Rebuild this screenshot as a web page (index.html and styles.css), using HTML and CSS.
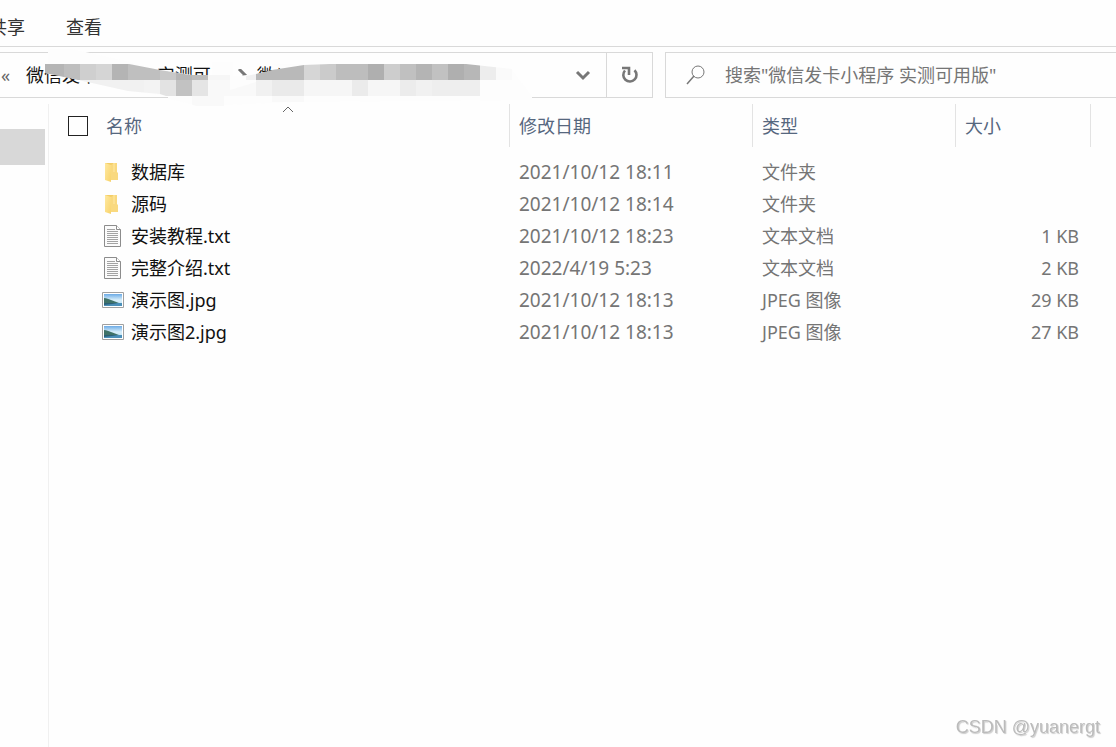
FILE: index.html
```
<!DOCTYPE html>
<html lang="zh-CN">
<head>
    <meta charset="UTF-8">
    <meta name="viewport" content="width=device-width, initial-scale=1.0">
    <title>微信发卡小程序 实测可用版</title>
    <link rel="stylesheet" href="styles.css">
</head>
<body>
    <svg class="defs" width="0" height="0" aria-hidden="true">
        <linearGradient id="folder-front" x1="0" y1="0" x2="1" y2="1">
            <stop offset="0" stop-color="#ffe9a0"/>
            <stop offset="1" stop-color="#f8d36c"/>
        </linearGradient>
        <linearGradient id="sky" x1="0" y1="0" x2="0" y2="1">
            <stop offset="0" stop-color="#6cabe6"/>
            <stop offset="0.5" stop-color="#d9effa"/>
            <stop offset="1" stop-color="#b5dcef"/>
        </linearGradient>
        <symbol id="icon-folder" viewBox="0 0 22 22">
            <path d="M3 2h12v17H3z" fill="#f3cd66"/>
            <path d="M3 2l6 2v17l-6-2z" fill="url(#folder-front)"/>
            <path d="M9 4l3-2h3v9l1 1v7H9z" fill="#f9d97f"/>
            <path d="M12 2v9" stroke="#ffe9a6"/>
        </symbol>
        <symbol id="icon-text" viewBox="0 0 22 22">
            <path d="M2.500 .5h12l4 4v17h-16z" fill="#fbfbfb" stroke="#8c8c8c"/>
            <path d="M14.500 .5v4h4" fill="#fff" stroke="#8c8c8c"/>
            <path d="M5 4.500h8M5 6.500h11M5 8.500h11M5 10.500h11M5 12.500h11M5 14.500h11M5 16.500h11M5 18.500h11" stroke="#a3a3a3"/>
        </symbol>
        <symbol id="icon-image" viewBox="0 0 22 22">
            <path d="M.5 3.500h21v15H.5z" fill="#fff" stroke="#a0a0a0"/>
            <path d="M2 5h18v12H2z" fill="url(#sky)"/>
            <path d="M2 9c3 0 4 1 7 2s5 2 8 3H2z" fill="#3f7268"/>
            <path d="M2 14h18v3H2z" fill="#4b8fb8"/>
            <path d="M2 14h14l-6 1-8 1z" fill="#2c6076"/>
        </symbol>
    </svg>

    <nav class="ribbon">
        <button type="button">共享</button>
        <button type="button">查看</button>
    </nav>

    <div class="toolbar">
        <div class="address">
            <div class="crumbs">
                <span class="more">«</span>
                <a href="#">微信发卡小程序 实测可用</a>
                <svg class="crumb-arrow" width="12" height="12" viewBox="0 0 12 12"><path d="M2 0l6 6-6 6" fill="none" stroke="#777" stroke-width="3"/></svg>
                <a href="#">微信发卡小程序</a>
            </div>
            <button type="button" class="history" aria-label="展开">
                <svg width="16" height="12" viewBox="0 0 16 12"><path d="M2 3l6 6 6-6" fill="none" stroke="#777" stroke-width="3"/></svg>
            </button>
            <button type="button" class="refresh" aria-label="刷新">
                <svg width="20" height="20" viewBox="0 0 20 20">
                    <path d="M14.500 5.200A6.600 6.600 0 1 1 5 5.500" fill="none" stroke="#777" stroke-width="2.600"/>
                    <path d="M2 3h7v7" fill="none" stroke="#777" stroke-width="2.600"/>
                </svg>
            </button>
            <!-- 路径打码 -->
            <svg class="mosaic" width="560" height="60" viewBox="0 48 560 60" aria-hidden="true">
                <clipPath id="stroke-left">
                    <path d="M45 64H129L160 70 190 75H230V90L256 82V106H196L160 94 128 91 92 83 45 73z"/>
                </clipPath>
                <clipPath id="stroke-right">
                    <path d="M246 76L256 74 272 70 304 65 330 64H466L512 69V80L496 96 304 102H246z"/>
                </clipPath>
                <path d="M48 49H72L130 62 160 70 192 75H212V62H233V76H238L256 74 304 65 330 64H466L512 70 532 96V100L300 102 200 106 168 99V96L128 91 92 82 45 73V64H48z" fill="#fdfdfd"/>
                <path d="M272 64h140v10H290z" fill="#fdfdfd"/>
                <g clip-path="url(#stroke-left)">
                    <path d="M45 64h19v16H45z" fill="#b5b5b5"/>
                    <path d="M64 64h16v16H64z" fill="#bebebe"/>
                    <path d="M80 64h16v16H80z" fill="#cfcfcf"/>
                    <path d="M96 64h16v16H96z" fill="#d5d5d5"/>
                    <path d="M112 64h16v16h-16z" fill="#b4b4b4"/>
                    <path d="M128 64h32v16h-32z" fill="#bfbfbf"/>
                    <path d="M160 64h16v16h-16z" fill="#c8c8c8"/>
                    <path d="M176 64h16v16h-16z" fill="#b6b6b6"/>
                    <path d="M192 64h16v16h-16z" fill="#bdbdbd"/>
                    <path d="M208 64h48v16h-48z" fill="#f6f6f6"/>
                    <path d="M80 80h64v16H80z" fill="#f1f1f1"/>
                    <path d="M144 80h16v16h-16z" fill="#f3f3f3"/>
                    <path d="M160 80h16v16h-16z" fill="#e3e3e3"/>
                    <path d="M176 80h16v16h-16z" fill="#c2c2c2"/>
                    <path d="M192 80h16v16h-16z" fill="#e5e5e5"/>
                    <path d="M208 80h48v16h-48z" fill="#f9f9f9"/>
                    <path d="M192 96h32v10h-32z" fill="#f9f9f9"/>
                </g>
                <g clip-path="url(#stroke-right)">
                    <path d="M240 64h16v16h-16z" fill="#f1f1f1"/>
                    <path d="M256 64h48v16h-48z" fill="#b9b9b9"/>
                    <path d="M304 64h16v16h-16z" fill="#d6d6d6"/>
                    <path d="M320 64h16v16h-16z" fill="#cbcbcb"/>
                    <path d="M336 64h32v16h-32z" fill="#bdbdbd"/>
                    <path d="M368 64h16v16h-16z" fill="#afafaf"/>
                    <path d="M384 64h16v16h-16z" fill="#cdcdcd"/>
                    <path d="M400 64h16v16h-16z" fill="#c0c0c0"/>
                    <path d="M416 64h16v16h-16z" fill="#b4b4b4"/>
                    <path d="M432 64h16v16h-16z" fill="#c1c1c1"/>
                    <path d="M448 64h16v16h-16z" fill="#afafaf"/>
                    <path d="M464 64h16v16h-16z" fill="#b7b7b7"/>
                    <path d="M480 64h16v16h-16z" fill="#ededed"/>
                    <path d="M496 64h16v16h-16z" fill="#fafafa"/>
                    <path d="M256 80h16v16h-16z" fill="#f1f1f1"/>
                    <path d="M272 80h32v16h-32z" fill="#eaeaea"/>
                    <path d="M304 80h48v16h-48z" fill="#f6f6f6"/>
                    <path d="M352 80h16v16h-16z" fill="#ebebeb"/>
                    <path d="M368 80h32v16h-32z" fill="#f6f6f6"/>
                    <path d="M400 80h16v16h-16z" fill="#ececec"/>
                    <path d="M416 80h16v16h-16z" fill="#f1f1f1"/>
                    <path d="M432 80h48v16h-48z" fill="#eeeeee"/>
                    <path d="M272 96h32v6h-32z" fill="#f9f9f9"/>
                </g>
            </svg>
        </div>
        <label class="search">
            <svg width="20" height="20" viewBox="0 0 20 20"><circle cx="12" cy="7" r="6" fill="none" stroke="#777"/><path d="M8 11l-7 8" stroke="#777" stroke-width="1.500"/></svg>
            <input type="text" aria-label="搜索" placeholder="搜索&quot;微信发卡小程序 实测可用版&quot;">
        </label>
    </div>

    <div class="content">
        <aside class="sidebar">
            <div class="selected"></div>
        </aside>
        <main class="files">
            <table>
                <colgroup>
                    <col class="col-name">
                    <col class="col-date">
                    <col class="col-type">
                    <col class="col-size">
                    <col class="col-rest">
                </colgroup>
                <thead>
                    <tr>
                        <th>
                            <svg class="sort" width="12" height="8" viewBox="0 0 12 8"><path d="M1 7l5-5 5 5" fill="none" stroke="#666"/></svg>
                            <div class="head-name">
                                <input type="checkbox" aria-label="全选">
                                <span>名称</span>
                            </div>
                        </th>
                        <th>修改日期</th>
                        <th>类型</th>
                        <th>大小</th>
                        <td></td>
                    </tr>
                </thead>
                <tbody>
                    <tr>
                        <td><div class="file"><svg><use href="#icon-folder"/></svg>数据库</div></td>
                        <td class="date">2021/10/12 18:11</td>
                        <td>文件夹</td>
                        <td></td>
                    </tr>
                    <tr>
                        <td><div class="file"><svg><use href="#icon-folder"/></svg>源码</div></td>
                        <td class="date">2021/10/12 18:14</td>
                        <td>文件夹</td>
                        <td></td>
                    </tr>
                    <tr>
                        <td><div class="file"><svg><use href="#icon-text"/></svg>安装教程.txt</div></td>
                        <td class="date">2021/10/12 18:23</td>
                        <td>文本文档</td>
                        <td class="size">1 KB</td>
                    </tr>
                    <tr>
                        <td><div class="file"><svg><use href="#icon-text"/></svg>完整介绍.txt</div></td>
                        <td class="date">2022/4/19 5:23</td>
                        <td>文本文档</td>
                        <td class="size">2 KB</td>
                    </tr>
                    <tr>
                        <td><div class="file"><svg><use href="#icon-image"/></svg>演示图.jpg</div></td>
                        <td class="date">2021/10/12 18:13</td>
                        <td>JPEG 图像</td>
                        <td class="size">29 KB</td>
                    </tr>
                    <tr>
                        <td><div class="file"><svg><use href="#icon-image"/></svg>演示图2.jpg</div></td>
                        <td class="date">2021/10/12 18:13</td>
                        <td>JPEG 图像</td>
                        <td class="size">27 KB</td>
                    </tr>
                </tbody>
            </table>
        </main>
    </div>

    <div class="watermark">CSDN @yuanergt</div>
</body>
</html>
```
FILE: styles.css
```
* {
    margin: 0;
    padding: 0;
    box-sizing: border-box;
}

body {
    font-family: 'Noto Sans', 'Noto Sans CJK SC', sans-serif;
    font-size: 18px;
    line-height: 26px;
    color: #757575;
    background: #fefefe;
    min-height: 100vh;
    display: flex;
    flex-direction: column;
    overflow-x: hidden;
}

button,
input {
    font: inherit;
    color: inherit;
    background: none;
    border: none;
}

.defs {
    position: absolute;
}

/* 顶部选项卡 */
.ribbon {
    display: flex;
    gap: 41px;
    height: 47px;
    padding-top: 8px;
    margin-left: -11px;
    border-bottom: 1px solid #d9d9d9;
    color: #333;
}

/* 地址栏和搜索框 */
.toolbar {
    display: grid;
    grid-template-columns: 653fr 451fr;
    gap: 12px;
    height: 46px;
    margin-top: 5px;
}

.address {
    position: relative;
    min-width: 0;
    display: flex;
    border: 1px solid #d9d9d9;
    border-left: none;
}

.crumbs {
    flex: 1;
    min-width: 0;
    display: flex;
    align-items: center;
    overflow: hidden;
    white-space: nowrap;
    color: #111;
}

.crumbs a {
    color: inherit;
    text-decoration: none;
}

.more {
    width: 26px;
    padding-left: 1px;
    color: #666;
}

.crumb-arrow {
    flex: none;
    margin: 0 8px;
}

.history,
.refresh {
    width: 46px;
    display: flex;
    align-items: center;
    justify-content: center;
}

.refresh {
    border-left: 1px solid #d9d9d9;
}

.mosaic {
    position: absolute;
    left: 0;
    top: -5px;
    pointer-events: none;
}

.search {
    min-width: 0;
    display: flex;
    align-items: center;
    gap: 19px;
    padding-left: 20px;
    border: 1px solid #d9d9d9;
    border-right: none;
}

.search svg {
    flex: none;
}

.search input {
    flex: 1;
    min-width: 0;
    outline: none;
}

.search input::placeholder {
    color: #757575;
    opacity: 1;
}

/* 文件列表 */
.content {
    flex: 1;
    display: flex;
    padding-top: 6px;
}

.sidebar {
    flex: none;
    width: 49px;
    padding-top: 25px;
    border-right: 1px solid #f0f0f0;
}

.selected {
    width: 45px;
    height: 36px;
    background: #d8d8d8;
}

.files {
    flex: 1;
    min-width: 0;
}

table {
    width: 100%;
    table-layout: fixed;
    border-collapse: separate;
    border-spacing: 0;
}

.col-date {
    width: 243px;
}

.col-type {
    width: 203px;
}

.col-size {
    width: 135px;
}

.col-rest {
    width: 25px;
}

th {
    position: relative;
    height: 43px;
    padding-left: 9px;
    border-right: 1px solid #e3e3e3;
    text-align: left;
    font-weight: 400;
    color: #56677e;
}

th:first-child {
    padding-left: 19px;
}

.head-name {
    display: flex;
    align-items: center;
    gap: 18px;
}

.head-name input {
    appearance: none;
    width: 20px;
    height: 20px;
    border: 1px solid #222;
}

.head-name input:checked {
    background: #44566f;
}

.sort {
    position: absolute;
    top: 1px;
    left: calc(50% + 3px);
}

tbody::before {
    content: '';
    display: block;
    height: 9px;
}

tbody td {
    height: 32px;
    padding-left: 9px;
    white-space: nowrap;
}

tbody td:first-child {
    padding-left: 53px;
}

.file {
    display: flex;
    align-items: center;
    gap: 7px;
    color: #111;
}

.file svg {
    width: 22px;
    height: 22px;
}

.date {
    font-size: 19px;
}

.size {
    text-align: right;
    padding-right: 12px;
}

.watermark {
    position: fixed;
    right: 16px;
    bottom: 7px;
    font-family: 'Liberation Sans', sans-serif;
    color: #bbb;
    text-shadow: -1px 0 #fff, 1px 1px 1px #ccc;
}
```
